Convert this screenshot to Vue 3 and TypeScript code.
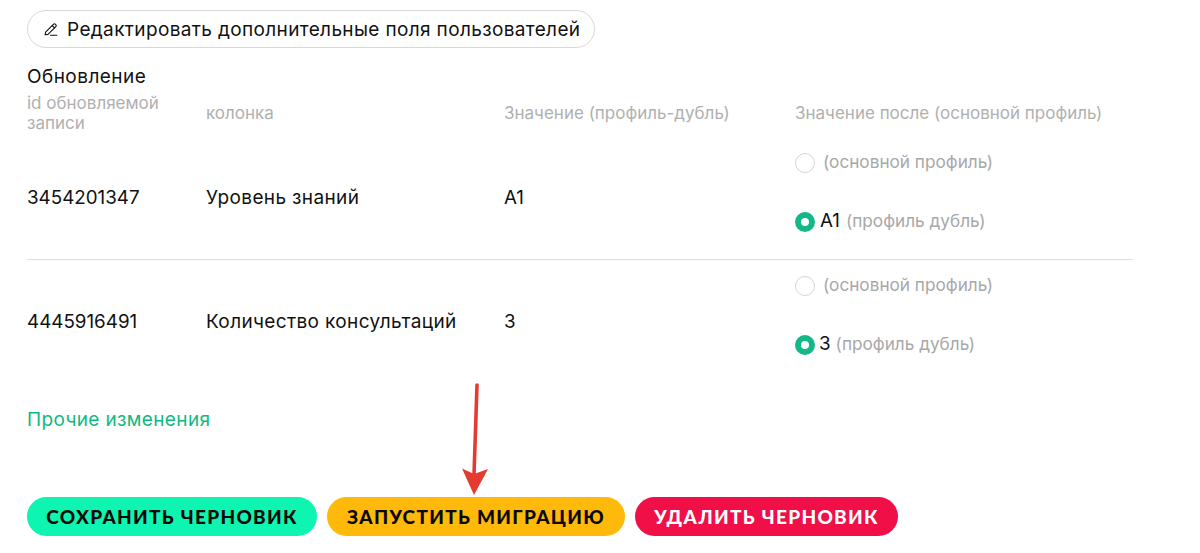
<script setup lang="ts">
interface Row { id: string; column: string; value: string }
const rows: Row[] = [
  { id: '3454201347', column: 'Уровень знаний', value: 'A1' },
  { id: '4445916491', column: 'Количество консультаций', value: '3' },
]
</script>

<template>
  <div class="page">
    <button class="edit" type="button">
      <svg class="pen" viewBox="0 0 16 16" width="16" height="16" fill="none" stroke="#111" stroke-width="1.1" stroke-linejoin="round" stroke-linecap="round">
        <path d="M2.6 11.2 10.4 3.3a1.5 1.5 0 0 1 2.1 0l.3.3a1.5 1.5 0 0 1 0 2.1L5 13.4l-2.9.4z" />
        <path d="M9.2 4.5l2.4 2.4" />
        <path d="M7.5 14.3h6.3" />
      </svg>
      <span>Редактировать дополнительные поля пользователей</span>
    </button>

    <h3 class="title">Обновление</h3>

    <div class="grid head">
      <div>id обновляемой записи</div>
      <div>колонка</div>
      <div>Значение (профиль-дубль)</div>
      <div class="after">Значение после (основной профиль)</div>
    </div>

    <div v-for="row in rows" :key="row.id" class="grid row">
      <div class="num">{{ row.id }}</div>
      <div>{{ row.column }}</div>
      <div class="num">{{ row.value }}</div>
      <div class="choices">
        <div class="choice">
          <span class="radio"></span>
          <span class="muted first">(основной профиль)</span>
        </div>
        <div class="choice">
          <span class="radio on"></span>
          <span class="val">{{ row.value }}</span>
          <span class="muted">(профиль дубль)</span>
        </div>
      </div>
    </div>

    <a class="link">Прочие изменения</a>

    <div class="actions">
      <button class="btn green" type="button">Сохранить черновик</button>
      <button class="btn amber" type="button">Запустить миграцию</button>
      <button class="btn red" type="button">Удалить черновик</button>
      <svg class="arrow" width="30" height="118" viewBox="0 0 30 118">
        <path d="M17 5 L14 95" stroke="#e53a30" stroke-width="3.6" stroke-linecap="round" fill="none" />
        <path d="M2 88.5 L14 94 L28 89 L14 115 Z" fill="#e53a30" />
      </svg>
    </div>
  </div>
</template>

<style>
html, body { margin: 0; background: #fff; }
</style>

<style scoped>
.page {
  width: 1200px;
  height: 553px;
  box-sizing: border-box;
  padding: 10px 67px 0 27px;
  font-family: Inter, "Noto Sans", sans-serif;
  color: #111;
  overflow: hidden;
}
.edit {
  display: inline-flex;
  align-items: center;
  gap: 8px;
  height: 38px;
  padding: 0 14px 0 15px;
  border: 1px solid #d8d8d8;
  border-radius: 19px;
  background: #fff;
  font: inherit;
  font-size: 19px;
  letter-spacing: 0.36px;
  color: #111;
  white-space: nowrap;
}
.pen { flex: none; }
.title {
  margin: 18px 0 0;
  font-size: 19px;
  letter-spacing: 0.45px;
  line-height: 21px;
  font-weight: 400;
}
.grid {
  display: grid;
  grid-template-columns: 179px 298px 291px 1fr;
  align-items: center;
}
.head {
  height: 42px;
  margin-top: 5px;
  font-size: 17px;
  line-height: 20px;
  color: #b0b0b0;
}
.head > div:first-child { width: 140px; }
.row {
  font-size: 19px;
  letter-spacing: 0.36px;
  height: 123px;
  padding-top: 2px;
}
.row + .row {
  height: 123px;
  padding-top: 0;
  border-top: 1px solid #dcdcdc;
}
.num { font-size: 18.8px; letter-spacing: 0; }
.choices {
  display: flex;
  flex-direction: column;
  gap: 39px;
  align-self: start;
  padding-top: 17px;
}
.row + .row .choices { padding-top: 16px; }
.choice {
  display: flex;
  align-items: center;
  height: 20px;
  gap: 6px;
}
.radio {
  box-sizing: border-box;
  width: 20px;
  height: 20px;
  border-radius: 50%;
  border: 1px solid #d4d4d4;
  background: #fff;
  flex: none;
}
.radio.on {
  border: 6.5px solid #14b888;
}
.val { font-size: 18.8px; letter-spacing: 0; color: #111; margin-left: -1px; margin-top: -3px; }
.row + .row .val { margin-left: -2px; margin-right: -1px; }
.muted { font-size: 17.2px; letter-spacing: 0; color: #a8a8a8; margin-top: -3px; }
.first { margin-left: 2px; }
.link {
  display: block;
  margin-top: 25px;
  font-size: 19px;
  letter-spacing: 0.36px;
  line-height: 24px;
  color: #10b981;
}
.actions {
  position: relative;
  display: flex;
  gap: 10px;
  margin-top: 65px;
}
.btn {
  height: 39px;
  border: 0;
  border-radius: 20px;
  font-family: Lato, "Liberation Sans", sans-serif;
  font-weight: 900;
  font-size: 19px;
  letter-spacing: 1.3px;
  text-transform: uppercase;
  color: #0a0a0a;
  padding: 0;
}
.green { width: 290px; background: #0df5b0; }
.amber { width: 298px; background: #ffb90b; }
.red { width: 263px; background: #f00f47; color: #fff; }
.arrow {
  position: absolute;
  left: 433px;
  top: -117px;
}
</style>
